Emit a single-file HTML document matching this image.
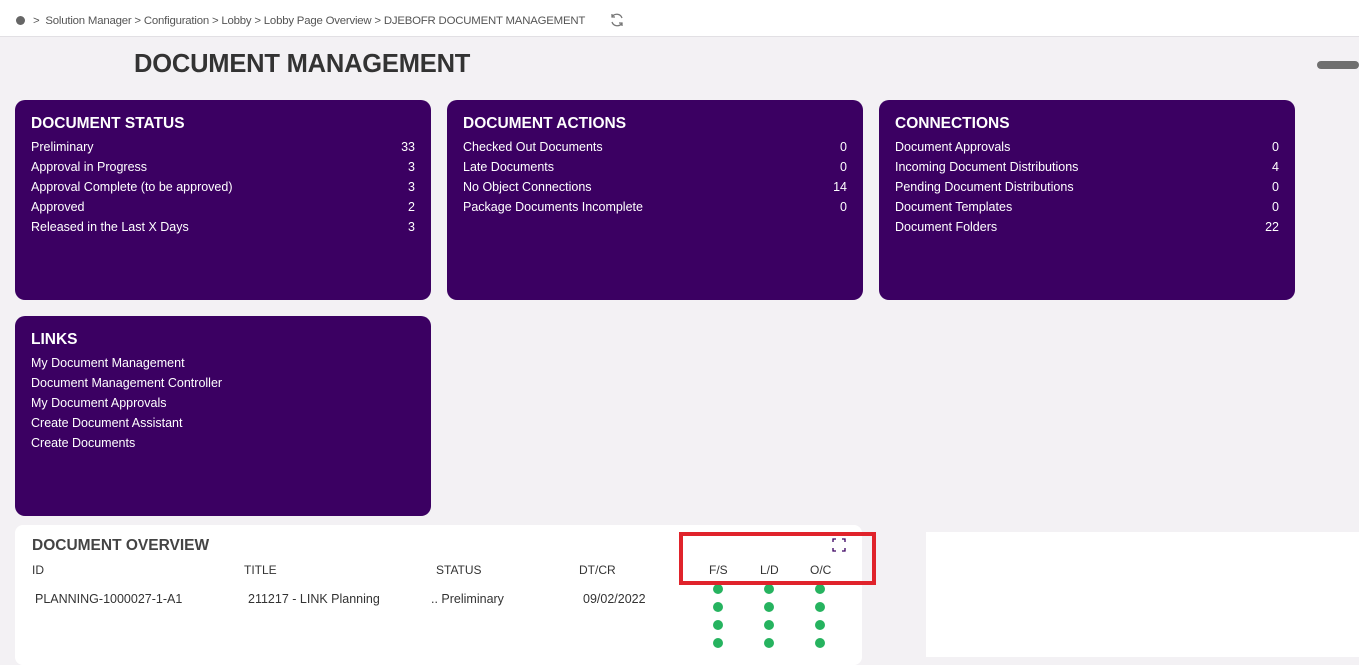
<!DOCTYPE html>
<html><head><meta charset="utf-8"><style>
*{box-sizing:border-box;margin:0;padding:0}
body{width:1359px;height:657px;overflow:hidden;background:#f3f1f4;font-family:"Liberation Sans",sans-serif;position:relative;color:#333}
.top{position:absolute;left:0;top:0;width:1359px;height:37px;background:#fff;border-bottom:1px solid #e2e0e4;font-size:11.4px;color:#555}
.top .dot{position:absolute;left:16px;top:16px;width:9px;height:9px;border-radius:50%;background:#666}
.top .bc{position:absolute;left:33px;top:15px;letter-spacing:-0.2px}
.top svg{position:absolute;left:609px;top:12px}
h1{position:absolute;left:134px;top:50px;font-size:25.5px;font-weight:bold;color:#333;letter-spacing:-0.2px}
.sb{position:absolute;left:1317px;top:61px;width:42px;height:8px;border-radius:4px;background:#6f6f6f}
.card{position:absolute;width:416px;height:200px;background:#3b0062;border-radius:10px;color:#fff;padding:15px 16px 0 16px}
.card h2{font-size:15.5px;font-weight:bold;margin-bottom:4px}
.row{display:flex;justify-content:space-between;font-size:12.5px;height:20px;line-height:20px}
.ov{position:absolute;left:15px;top:525px;width:847px;height:140px;background:#fff;border-radius:8px}
.ov h3{position:absolute;left:17px;top:12px;font-size:15.5px;font-weight:bold;color:#444}
.ov .h{position:absolute;top:38px;font-size:12px;color:#333}
.ov .c{position:absolute;top:67px;font-size:12.5px;color:#333}
.g{position:absolute;width:10px;height:10px;border-radius:50%;background:#26b35f}
.wr{position:absolute;left:926px;top:532px;width:433px;height:125px;background:#fff}
.red{position:absolute;left:679px;top:532px;width:197px;height:53px;border:4px solid #e0232b}
</style></head><body>
<div class="top"><div class="dot"></div><div class="bc">&gt;&nbsp; Solution Manager &gt; Configuration &gt; Lobby &gt; Lobby Page Overview &gt; DJEBOFR DOCUMENT MANAGEMENT</div>
<svg width="16" height="16" viewBox="0 0 16 16" fill="none" stroke="#777" stroke-width="1.3"><path d="M13 6A5.5 5.5 0 0 0 3 5M3 2v3h3M3 10a5.5 5.5 0 0 0 10 1M13 14v-3h-3"/></svg></div>
<h1>DOCUMENT MANAGEMENT</h1>
<div class="sb"></div>
<div class="card" style="left:15px;top:100px"><h2>DOCUMENT STATUS</h2>
<div class="row"><span>Preliminary</span><span>33</span></div>
<div class="row"><span>Approval in Progress</span><span>3</span></div>
<div class="row"><span>Approval Complete (to be approved)</span><span>3</span></div>
<div class="row"><span>Approved</span><span>2</span></div>
<div class="row"><span>Released in the Last X Days</span><span>3</span></div></div>
<div class="card" style="left:447px;top:100px"><h2>DOCUMENT ACTIONS</h2>
<div class="row"><span>Checked Out Documents</span><span>0</span></div>
<div class="row"><span>Late Documents</span><span>0</span></div>
<div class="row"><span>No Object Connections</span><span>14</span></div>
<div class="row"><span>Package Documents Incomplete</span><span>0</span></div></div>
<div class="card" style="left:879px;top:100px"><h2>CONNECTIONS</h2>
<div class="row"><span>Document Approvals</span><span>0</span></div>
<div class="row"><span>Incoming Document Distributions</span><span>4</span></div>
<div class="row"><span>Pending Document Distributions</span><span>0</span></div>
<div class="row"><span>Document Templates</span><span>0</span></div>
<div class="row"><span>Document Folders</span><span>22</span></div></div>
<div class="card" style="left:15px;top:316px"><h2>LINKS</h2>
<div class="row"><span>My Document Management</span></div>
<div class="row"><span>Document Management Controller</span></div>
<div class="row"><span>My Document Approvals</span></div>
<div class="row"><span>Create Document Assistant</span></div>
<div class="row"><span>Create Documents</span></div></div>
<div class="ov"><h3>DOCUMENT OVERVIEW</h3>
<div class="h" style="left:17px">ID</div><div class="h" style="left:229px">TITLE</div><div class="h" style="left:421px">STATUS</div><div class="h" style="left:564px">DT/CR</div>
<div class="h" style="left:694px">F/S</div><div class="h" style="left:745px">L/D</div><div class="h" style="left:795px">O/C</div>
<svg style="position:absolute;left:817px;top:13px" width="14" height="14" viewBox="0 0 14 14" fill="none" stroke="#3b0062" stroke-width="1.3"><path d="M1 4V1h3M10 1h3v3M13 10v3h-3M4 13H1v-3"/></svg>
<div class="c" style="left:20px">PLANNING-1000027-1-A1</div><div class="c" style="left:233px">211217 - LINK Planning</div><div class="c" style="left:416px">.. Preliminary</div><div class="c" style="left:568px">09/02/2022</div>
<div class="g" style="left:698px;top:59px"></div><div class="g" style="left:749px;top:59px"></div><div class="g" style="left:800px;top:59px"></div>
<div class="g" style="left:698px;top:77px"></div><div class="g" style="left:749px;top:77px"></div><div class="g" style="left:800px;top:77px"></div>
<div class="g" style="left:698px;top:95px"></div><div class="g" style="left:749px;top:95px"></div><div class="g" style="left:800px;top:95px"></div>
<div class="g" style="left:698px;top:113px"></div><div class="g" style="left:749px;top:113px"></div><div class="g" style="left:800px;top:113px"></div>
</div>
<div class="wr"></div>
<div class="red"></div>
</body></html>
